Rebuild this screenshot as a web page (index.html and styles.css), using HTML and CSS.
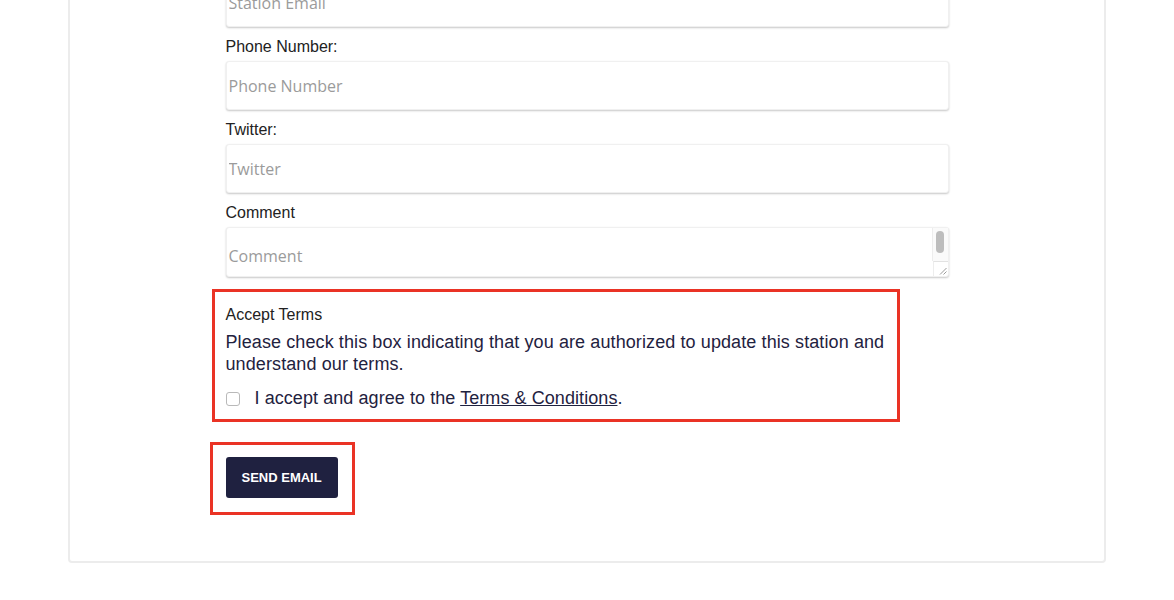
FILE: index.html
```html
<!DOCTYPE html>
<html>
<head>
<meta charset="utf-8">
<link rel="stylesheet" href="styles.css">
</head>
<body>
<div class="card">
  <form class="form">
    <div class="group first">
      <input class="field" type="text" placeholder="Station Email">
    </div>
    <div class="group">
      <label class="label">Phone Number:</label>
      <input class="field" type="text" placeholder="Phone Number">
    </div>
    <div class="group">
      <label class="label">Twitter:</label>
      <input class="field" type="text" placeholder="Twitter">
    </div>
    <div class="group">
      <label class="label">Comment</label>
      <div class="area-wrap">
        <textarea class="field area" placeholder="Comment"></textarea>
        <div class="scroll-track"><div class="scroll-thumb"></div></div>
        <div class="resizer">
          <svg width="8" height="8" viewBox="0 0 8 8"><path d="M1 7.5 L7.5 1 M4.5 7.5 L7.5 4.5" stroke="#9a9a9a" stroke-width="1" fill="none"/></svg>
        </div>
      </div>
    </div>
    <div class="terms">
      <div class="terms-title">Accept Terms</div>
      <p class="terms-text">Please check this box indicating that you are authorized to update this station and understand our terms.</p>
      <label class="check-row"><input class="check" type="checkbox"><span>I accept and agree to the <a class="link" href="#">Terms &amp; Conditions</a>.</span></label>
    </div>
    <div class="submit-box">
      <button class="btn" type="button">SEND EMAIL</button>
    </div>
  </form>
</div>
</body>
</html>
```
FILE: styles.css
```css
html, body {
  margin: 0;
  padding: 0;
  background: #fff;
  overflow: hidden;
}
body {
  font-family: "Liberation Sans", Arial, sans-serif;
  color: #222;
}
.card {
  margin: -40px 0 0 68px;
  width: 1038px;
  box-sizing: border-box;
  border: 2px solid #ececec;
  border-radius: 4px;
  padding: 16px 0 46px;
}
.form {
  width: 723px;
  margin: 0 auto;
  display: flex;
  flex-direction: column;
  align-items: flex-start;
}
.group {
  width: 100%;
  margin-bottom: 11px;
  display: flex;
  flex-direction: column;
}
.label {
  font-size: 16px;
  line-height: 18px;
  margin-bottom: 5px;
  color: #222;
}
.field {
  display: block;
  width: 100%;
  height: 49px;
  box-sizing: border-box;
  border: 1px solid #f0f0f0;
  border-radius: 3px;
  box-shadow: 0 1px 2px rgba(0,0,0,0.22);
  padding: 0 2px;
  font-family: "Open Sans", "DejaVu Sans", sans-serif;
  font-size: 16px;
  color: #333;
  background: #fff;
  outline: none;
}
.field::placeholder {
  color: #9b9b9b;
}
.area-wrap {
  position: relative;
  width: 100%;
}
.area {
  height: 50px;
  resize: none;
  padding: 17px 2px 0;
  overflow: hidden;
  line-height: 22px;
}
.scroll-track {
  position: absolute;
  top: 1px;
  right: 1px;
  width: 15px;
  height: 33px;
  border-left: 1px solid #ededed;
  background: #fafafa;
}
.scroll-thumb {
  width: 8px;
  height: 22px;
  margin: 3px 0 0 3px;
  border-radius: 4px;
  background: #bdbdbd;
}
.resizer {
  position: absolute;
  right: 1px;
  bottom: 1px;
  width: 15px;
  height: 15px;
  border-left: 1px solid #ededed;
  border-top: 1px solid #e2e2e2;
  display: flex;
  align-items: flex-end;
  justify-content: flex-end;
  padding: 0 1px 1px 0;
  box-sizing: border-box;
}
.resizer svg { display: block; }
.terms {
  margin: 1px 0 0 -14px;
  width: 688px;
  box-sizing: border-box;
  border: 3px solid #ea3325;
  padding: 14px 11px 10px;
}
.terms-title {
  font-size: 16px;
  line-height: 18px;
  color: #222;
}
.terms-text {
  margin: 7px 0 0;
  font-size: 18px;
  line-height: 22px;
  letter-spacing: 0.1px;
  color: #1f2240;
}
.check-row {
  margin-top: 12px;
  display: flex;
  align-items: center;
  gap: 15px;
  font-size: 18px;
  line-height: 22px;
  letter-spacing: 0.07px;
  color: #1f2240;
}
.check {
  -webkit-appearance: none;
  appearance: none;
  margin: 2px 0 0;
  width: 14px;
  height: 14px;
  border: 1px solid #b9b9b9;
  border-radius: 3px;
  background: #fff;
  box-sizing: border-box;
}
.link {
  color: #1f2240;
  text-decoration: underline;
}
.submit-box {
  margin: 20px 0 0 -16px;
  border: 3px solid #ea3325;
  padding: 12px 14px 14px 13px;
}
.btn {
  display: block;
  height: 41px;
  padding: 0 16px;
  border: none;
  border-radius: 3px;
  background: #1f2140;
  color: #fff;
  font-family: "Liberation Sans", Arial, sans-serif;
  font-weight: bold;
  font-size: 13px;
  letter-spacing: 0;
  cursor: pointer;
}
```
